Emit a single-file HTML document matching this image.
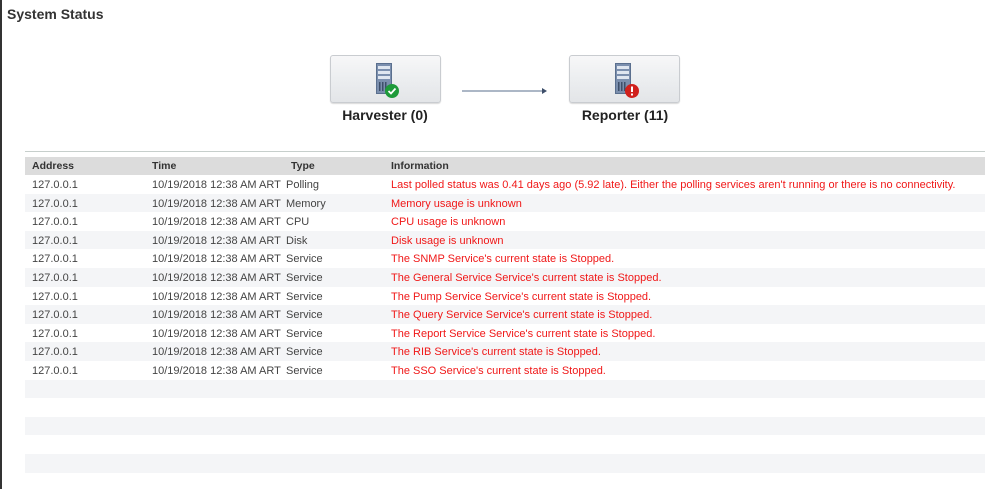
<!DOCTYPE html>
<html><head><meta charset="utf-8"><style>
*{margin:0;padding:0;box-sizing:border-box}
body{width:985px;height:489px;background:#fff;font-family:"Liberation Sans",Arial,sans-serif;position:relative;overflow:hidden}
.lb{position:absolute;left:0;top:0;width:2px;height:489px;background:#333}
.title{position:absolute;left:7px;top:6px;font-size:14px;font-weight:bold;color:#333}
.node{position:absolute;top:55px;width:111px;height:48px;border:1px solid #c9ccd0;border-radius:3px;background:linear-gradient(#f7f7f8,#eceef0 50%,#e3e5e8);box-shadow:0 1px 1px rgba(0,0,0,.15)}
.lbl{position:absolute;top:107px;font-size:14px;font-weight:bold;color:#222;text-align:center;width:140px}
.tbl{position:absolute;left:25px;top:151px;width:960px;border-top:1px solid #c7cfcc}
.row{height:18.6px;position:relative;font-size:11px;color:#444;line-height:20px}
.row span{position:absolute;top:0;white-space:nowrap}
.hd{margin-top:5px;background:#dcdcdc;font-weight:bold;color:#333;height:18px;line-height:18px;font-size:10.5px}
.g{background:#f4f5f7}
.c1{left:7px}.c2{left:127px}.c3{left:261px}.c4{left:366px}
.hd .c3{left:266px}
.r{color:#f01818}
</style></head><body>
<div class="lb"></div>
<div class="title">System Status</div>
<div class="node" style="left:330px"></div>
<div class="node" style="left:569px"></div>
<svg style="position:absolute;left:0;top:0" width="985" height="140">
<g transform="translate(376,63)">
<rect x="0" y="0" width="16" height="31" fill="#5a6f8e"/><rect x="1" y="1" width="14" height="29" fill="#7b8fae"/>
<rect x="2" y="3" width="12" height="3" fill="#dfe6f0"/><rect x="2" y="8" width="12" height="3" fill="#dfe6f0"/><rect x="2" y="13" width="12" height="3" fill="#dfe6f0"/>
<rect x="3" y="19" width="1.5" height="9" fill="#3e4f6a"/><rect x="6" y="19" width="1.5" height="9" fill="#3e4f6a"/><rect x="9" y="19" width="1.5" height="9" fill="#3e4f6a"/>
<circle cx="16" cy="28" r="7" fill="#1e9a3a"/><path d="M12.5 28 l2.5 2.5 l4.5 -5" stroke="#fff" stroke-width="1.8" fill="none"/>
</g>
<g transform="translate(615,63)">
<rect x="0" y="0" width="16" height="31" fill="#5a6f8e"/><rect x="1" y="1" width="14" height="29" fill="#7b8fae"/>
<rect x="2" y="3" width="12" height="3" fill="#dfe6f0"/><rect x="2" y="8" width="12" height="3" fill="#dfe6f0"/><rect x="2" y="13" width="12" height="3" fill="#dfe6f0"/>
<rect x="3" y="19" width="1.5" height="9" fill="#3e4f6a"/><rect x="6" y="19" width="1.5" height="9" fill="#3e4f6a"/><rect x="9" y="19" width="1.5" height="9" fill="#3e4f6a"/>
<circle cx="17" cy="28" r="7" fill="#d0201c"/><rect x="16" y="23.5" width="2" height="5.5" fill="#fff"/><rect x="16" y="30.5" width="2" height="2" fill="#fff"/>
</g>
<line x1="462" y1="91" x2="542" y2="91" stroke="#5a6f8e" stroke-width="1"/>
<path d="M542 88 L547 91 L542 94 Z" fill="#3e4f6a"/>
</svg>
<div class="lbl" style="left:315px">Harvester (0)</div>
<div class="lbl" style="left:555px">Reporter (11)</div>
<div class="tbl">
<div class="row hd"><span class="c1">Address</span><span class="c2">Time</span><span class="c3">Type</span><span class="c4">Information</span></div>
<div class="row"><span class="c1">127.0.0.1</span><span class="c2">10/19/2018 12:38 AM ART</span><span class="c3">Polling</span><span class="c4 r">Last polled status was 0.41 days ago (5.92 late). Either the polling services aren't running or there is no connectivity.</span></div>
<div class="row g"><span class="c1">127.0.0.1</span><span class="c2">10/19/2018 12:38 AM ART</span><span class="c3">Memory</span><span class="c4 r">Memory usage is unknown</span></div>
<div class="row"><span class="c1">127.0.0.1</span><span class="c2">10/19/2018 12:38 AM ART</span><span class="c3">CPU</span><span class="c4 r">CPU usage is unknown</span></div>
<div class="row g"><span class="c1">127.0.0.1</span><span class="c2">10/19/2018 12:38 AM ART</span><span class="c3">Disk</span><span class="c4 r">Disk usage is unknown</span></div>
<div class="row"><span class="c1">127.0.0.1</span><span class="c2">10/19/2018 12:38 AM ART</span><span class="c3">Service</span><span class="c4 r">The SNMP Service's current state is Stopped.</span></div>
<div class="row g"><span class="c1">127.0.0.1</span><span class="c2">10/19/2018 12:38 AM ART</span><span class="c3">Service</span><span class="c4 r">The General Service Service's current state is Stopped.</span></div>
<div class="row"><span class="c1">127.0.0.1</span><span class="c2">10/19/2018 12:38 AM ART</span><span class="c3">Service</span><span class="c4 r">The Pump Service Service's current state is Stopped.</span></div>
<div class="row g"><span class="c1">127.0.0.1</span><span class="c2">10/19/2018 12:38 AM ART</span><span class="c3">Service</span><span class="c4 r">The Query Service Service's current state is Stopped.</span></div>
<div class="row"><span class="c1">127.0.0.1</span><span class="c2">10/19/2018 12:38 AM ART</span><span class="c3">Service</span><span class="c4 r">The Report Service Service's current state is Stopped.</span></div>
<div class="row g"><span class="c1">127.0.0.1</span><span class="c2">10/19/2018 12:38 AM ART</span><span class="c3">Service</span><span class="c4 r">The RIB Service's current state is Stopped.</span></div>
<div class="row"><span class="c1">127.0.0.1</span><span class="c2">10/19/2018 12:38 AM ART</span><span class="c3">Service</span><span class="c4 r">The SSO Service's current state is Stopped.</span></div>
<div class="row g"></div><div class="row"></div><div class="row g"></div><div class="row"></div><div class="row g"></div><div class="row"></div>
</div>
</body></html>
